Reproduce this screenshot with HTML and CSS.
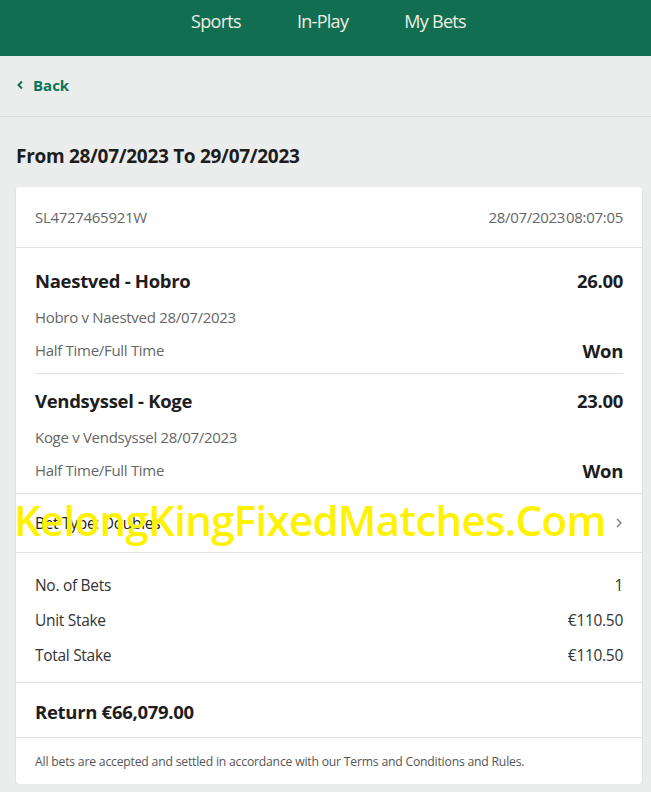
FILE: index.html
```html
<!DOCTYPE html>
<html lang="en">
<head>
  <meta charset="UTF-8" />
  <meta name="viewport" content="width=device-width, initial-scale=1.0"/>
  <title>My Bets</title>
  <link rel="stylesheet" href="styles.css">
</head>
<body>
  <header class="topbar">
    <nav class="nav">
      <a href="#">Sports</a>
      <a href="#">In-Play</a>
      <a href="#">My Bets</a>
    </nav>
  </header>

  <div class="backbar">
    <a href="#" class="back">
      <svg width="8" height="10" viewBox="0 0 8 10"><path d="M6 1.5L2.5 5L6 8.5" fill="none" stroke="currentColor" stroke-width="2"/></svg>
      Back
    </a>
  </div>

  <main class="page">
    <h2 class="range">From 28/07/2023 To 29/07/2023</h2>

    <div class="card">
      <div class="slip-head">
        <span>SL4727465921W</span>
        <span class="stamp"><span>28/07/2023</span><span>08:07:05</span></span>
      </div>

      <div class="legs">
        <div class="leg">
          <div class="line title"><strong>Naestved - Hobro</strong><strong>26.00</strong></div>
          <div class="line sub">Hobro v Naestved 28/07/2023</div>
          <div class="line result"><span>Half Time/Full Time</span><strong>Won</strong></div>
        </div>
        <div class="leg">
          <div class="line title"><strong>Vendsyssel - Koge</strong><strong>23.00</strong></div>
          <div class="line sub">Koge v Vendsyssel 28/07/2023</div>
          <div class="line result"><span>Half Time/Full Time</span><strong>Won</strong></div>
        </div>
      </div>

      <div class="bet-type">
        <span>Bet Type: Doubles</span>
        <svg width="8" height="12" viewBox="0 0 8 12"><path d="M2 2L6 6L2 10" fill="none" stroke="#777" stroke-width="1.3"/></svg>
        <div class="watermark">KelongKingFixedMatches.Com</div>
      </div>

      <div class="stakes">
        <div class="row"><span>No. of Bets</span><span>1</span></div>
        <div class="row"><span>Unit Stake</span><span>€110.50</span></div>
        <div class="row"><span>Total Stake</span><span>€110.50</span></div>
      </div>

      <div class="return">Return €66,079.00</div>

      <p class="terms">All bets are accepted and settled in accordance with our Terms and Conditions and Rules.</p>
    </div>
  </main>
</body>
</html>
```

FILE: styles.css
```css
body { margin: 0; background: #ebedec; font-family: "Open Sans", "Noto Sans", Arial, sans-serif; color: #222; }
.topbar { background: #126e51; height: 56px; }
.nav { display: flex; justify-content: center; gap: 56px; padding-top: 9px; padding-left: 6px; }
.nav a { color: #eeeee4; text-decoration: none; font-size: 18px; letter-spacing: -0.7px; }
.backbar { height: 61px; box-sizing: border-box; padding: 0 0 2px 16px; border-bottom: 1px solid #d9dbda; display: flex; align-items: center; }
.back { color: #0a7457; text-decoration: none; font-weight: 700; font-size: 15px; display: flex; align-items: center; gap: 9px; }
.page { padding: 0 9px 0 16px; }
.range { margin: 0; padding: 27px 0 18px; line-height: 25px; font-size: 19px; font-weight: 700; letter-spacing: -0.3px; color: #1d1d1d; }
.card { background: #fff; border-radius: 3px; box-shadow: 0 1px 2px rgba(0,0,0,0.15); }
.slip-head { display: flex; justify-content: space-between; align-items: center; height: 60px; padding: 0 19px; font-size: 15px; color: #666; letter-spacing: -0.3px; border-bottom: 1px solid #e2e2e2; }
.stamp span + span { margin-left: 1px; }
.legs { padding: 6px 19px 0; }
.leg { padding: 9px 0 10px; }
.leg + .leg { border-top: 1px solid #e2e2e2; }
.line { display: flex; justify-content: space-between; align-items: center; letter-spacing: -0.3px; color: #1d1d1d; }
.line.title { height: 34px; font-size: 18.5px; }
.line.sub { height: 40px; font-size: 15px; color: #666; }
.line.result { height: 26px; font-size: 15px; color: #666; }
.line.result strong { font-size: 18.5px; color: #1d1d1d; }
.bet-type { position: relative; display: flex; justify-content: space-between; align-items: center; height: 58px; padding: 0 19px; border-top: 1px solid #e2e2e2; border-bottom: 1px solid #e2e2e2; font-size: 15.5px; letter-spacing: -0.3px; }
.watermark { position: absolute; left: -2px; top: -3px; color: #fff200; font-size: 42px; font-weight: 600; letter-spacing: -0.7px; white-space: nowrap; }
.stakes { padding: 14px 19px 10px; border-bottom: 1px solid #e2e2e2; }
.row { display: flex; justify-content: space-between; align-items: center; height: 35px; font-size: 15.5px; letter-spacing: -0.3px; color: #333; }
.return { height: 55px; padding: 3px 19px 0; display: flex; align-items: center; box-sizing: border-box; font-size: 18.5px; font-weight: 700; letter-spacing: -0.3px; border-bottom: 1px solid #e2e2e2; color: #1d1d1d; }
.terms { margin: 0; height: 46px; padding: 0 19px; display: flex; align-items: center; font-size: 12.2px; color: #555; letter-spacing: -0.2px; }
```
